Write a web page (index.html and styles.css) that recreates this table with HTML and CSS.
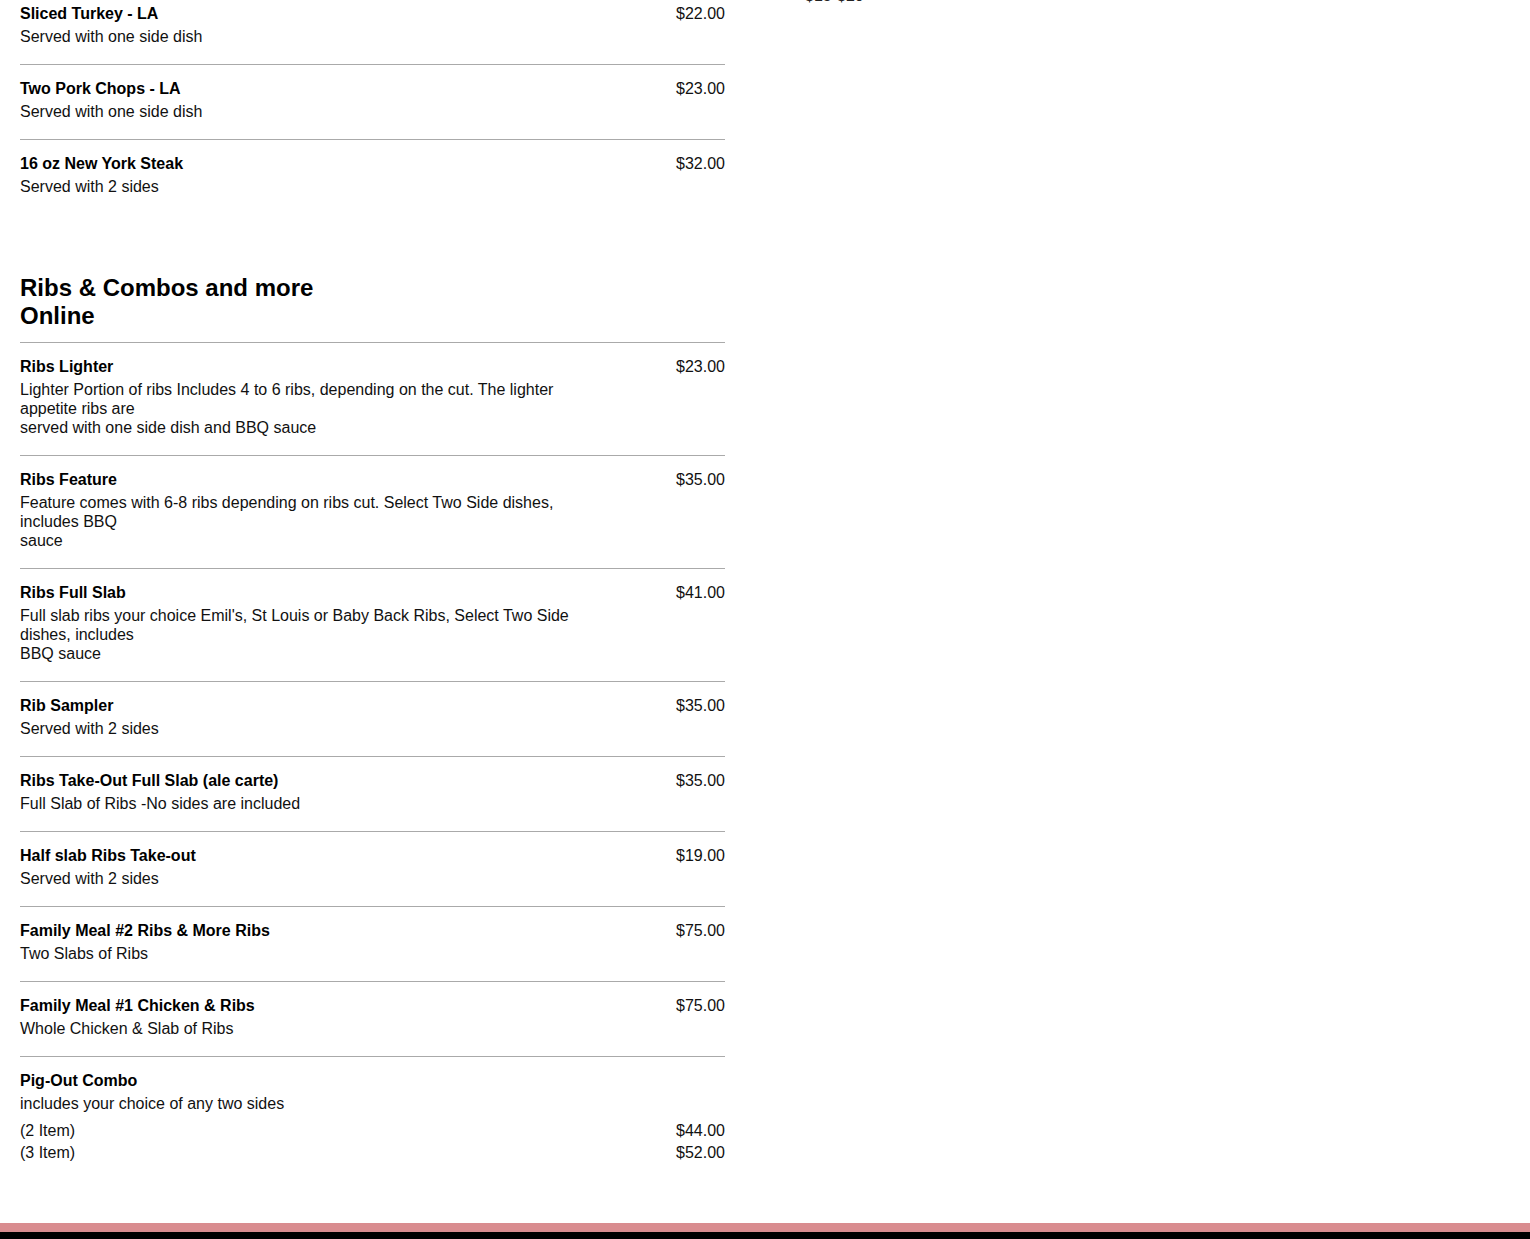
FILE: index.html
```html
<!DOCTYPE html>
<html lang="en">
<head>
<meta charset="utf-8">
<title>Menu</title>
<link rel="stylesheet" href="styles.css">
</head>
<body>
<div class="page">
  <main class="menu">
    <section class="section">
      <div class="item">
        <div class="item-main">
          <div class="item-name">Sliced Turkey - LA</div>
          <div class="item-desc">Served with one side dish</div>
        </div>
        <div class="item-price">$22.00</div>
      </div>
      <div class="item">
        <div class="item-main">
          <div class="item-name">Two Pork Chops - LA</div>
          <div class="item-desc">Served with one side dish</div>
        </div>
        <div class="item-price">$23.00</div>
      </div>
      <div class="item">
        <div class="item-main">
          <div class="item-name">16 oz New York Steak</div>
          <div class="item-desc">Served with 2 sides</div>
        </div>
        <div class="item-price">$32.00</div>
      </div>
    </section>

    <section class="section section-spaced">
      <h2 class="section-title">Ribs &amp; Combos and more Online</h2>
      <div class="item">
        <div class="item-main">
          <div class="item-name">Ribs Lighter</div>
          <div class="item-desc">Lighter Portion of ribs Includes 4 to 6 ribs, depending on the cut. The lighter appetite ribs are<br>served with one side dish and BBQ sauce</div>
        </div>
        <div class="item-price">$23.00</div>
      </div>
      <div class="item">
        <div class="item-main">
          <div class="item-name">Ribs Feature</div>
          <div class="item-desc">Feature comes with 6-8 ribs depending on ribs cut. Select Two Side dishes, includes BBQ<br>sauce</div>
        </div>
        <div class="item-price">$35.00</div>
      </div>
      <div class="item">
        <div class="item-main">
          <div class="item-name">Ribs Full Slab</div>
          <div class="item-desc">Full slab ribs your choice Emil's, St Louis or Baby Back Ribs, Select Two Side dishes, includes<br>BBQ sauce</div>
        </div>
        <div class="item-price">$41.00</div>
      </div>
      <div class="item">
        <div class="item-main">
          <div class="item-name">Rib Sampler</div>
          <div class="item-desc">Served with 2 sides</div>
        </div>
        <div class="item-price">$35.00</div>
      </div>
      <div class="item">
        <div class="item-main">
          <div class="item-name">Ribs Take-Out Full Slab (ale carte)</div>
          <div class="item-desc">Full Slab of Ribs -No sides are included</div>
        </div>
        <div class="item-price">$35.00</div>
      </div>
      <div class="item">
        <div class="item-main">
          <div class="item-name">Half slab Ribs Take-out</div>
          <div class="item-desc">Served with 2 sides</div>
        </div>
        <div class="item-price">$19.00</div>
      </div>
      <div class="item">
        <div class="item-main">
          <div class="item-name">Family Meal #2 Ribs &amp; More Ribs</div>
          <div class="item-desc">Two Slabs of Ribs</div>
        </div>
        <div class="item-price">$75.00</div>
      </div>
      <div class="item">
        <div class="item-main">
          <div class="item-name">Family Meal #1 Chicken &amp; Ribs</div>
          <div class="item-desc">Whole Chicken &amp; Slab of Ribs</div>
        </div>
        <div class="item-price">$75.00</div>
      </div>
      <div class="item item-variants">
        <div class="item-main item-main-full">
          <div class="item-name">Pig-Out Combo</div>
          <div class="item-desc">includes your choice of any two sides</div>
          <div class="variants">
            <div class="variant"><span>(2 Item)</span><span>$44.00</span></div>
            <div class="variant"><span>(3 Item)</span><span>$52.00</span></div>
          </div>
        </div>
      </div>
    </section>
  </main>
  <aside class="side">
    <div class="side-price">$15-$20</div>
  </aside>
</div>
<footer class="footer"></footer>
</body>
</html>
```
FILE: styles.css
```css
html, body {
  margin: 0;
  padding: 0;
  background: #fff;
}
body {
  font-family: "Liberation Sans", Arial, Helvetica, sans-serif;
  font-size: 16px;
  line-height: 19px;
  color: #111;
}
.page {
  display: flex;
  align-items: flex-start;
  padding: 0 20px;
  margin-top: -11px;
}
.menu {
  width: 705px;
  flex: none;
}
.side {
  margin-left: 80px;
  margin-top: -3px;
}
.side-price {
  color: #222;
}
.section-spaced {
  margin-top: 60px;
  margin-bottom: 43px;
}
.section-title {
  margin: 0;
  padding-bottom: 12px;
  max-width: 50%;
  font-size: 24px;
  line-height: 28px;
  font-weight: bold;
  color: #000;
}
.item {
  display: flex;
  justify-content: space-between;
  align-items: flex-start;
  border-top: 1px solid #aaa;
  padding: 14px 0 18px;
}
.item-main {
  display: flex;
  flex-direction: column;
  gap: 4px;
}
.item-main-full {
  flex: 1;
}
.item-name {
  font-weight: bold;
  color: #000;
}
.item-desc {
  max-width: 564px;
}
.item-price {
  color: #111;
}
.variants {
  display: flex;
  flex-direction: column;
  gap: 3px;
  margin-top: 4px;
}
.variant {
  display: flex;
  justify-content: space-between;
}
.footer {
  border-top: 9px solid #d98c8f;
  background: #000;
  height: 7px;
}
```
